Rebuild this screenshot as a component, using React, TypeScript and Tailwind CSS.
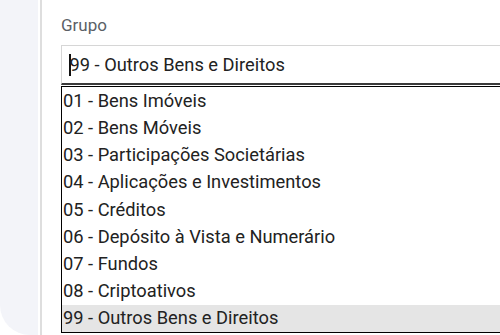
import React from "react";

const items = [
  "01 - Bens Imóveis",
  "02 - Bens Móveis",
  "03 - Participações Societárias",
  "04 - Aplicações e Investimentos",
  "05 - Créditos",
  "06 - Depósito à Vista e Numerário",
  "07 - Fundos",
  "08 - Criptoativos",
  "99 - Outros Bens e Direitos",
];

export default function App() {
  return (
    <div
      className="flex h-[335px] w-[500px] overflow-hidden bg-white"
      style={{ fontFamily: "Roboto, 'Liberation Sans', sans-serif" }}
    >
      <div className="flex h-full w-[40px] shrink-0">
        <div className="h-full w-[38px] rounded-bl-[30px] bg-[#f3f4f9]" />
      </div>
      <div className="h-full w-[2px] shrink-0 bg-[#dedede]" />
      <div className="flex min-w-0 flex-1 flex-col pl-[19px] pt-[13px]">
        <div className="text-[17px] leading-[24px] text-[#5b5f66]">Grupo</div>
        <div className="mt-[8px] flex h-[40px] w-[600px] items-center border-t border-l border-[#d6d6d6] border-b-2 border-b-[#3a3a3a] pl-[7px] text-[18.3px] text-[#222]">
          <span className="mr-[-1px] inline-block h-[22px] w-[1.5px] bg-[#111]" />
          99 - Outros Bens e Direitos
        </div>
        <div className="mt-[1px] w-[600px] border border-black bg-white">
          {items.map((t, i) => (
            <div
              key={t}
              className={`flex h-[27.2px] items-center pl-[1px] text-[18.3px] text-[#222] ${
                i === items.length - 1 ? "bg-[#e5e5e5]" : ""
              }`}
            >
              {t}
            </div>
          ))}
        </div>
      </div>
    </div>
  );
}
